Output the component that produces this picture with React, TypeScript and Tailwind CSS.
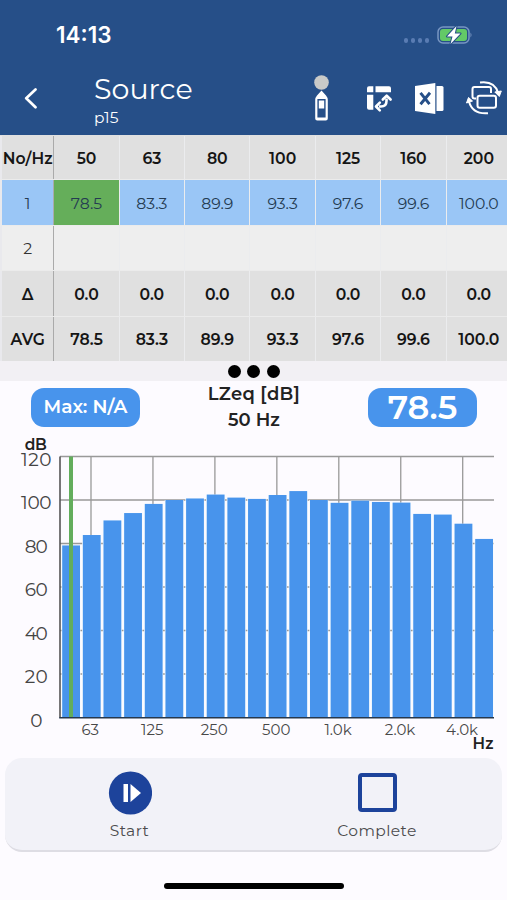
import { clsx } from "clsx";

const FREQUENCIES = ["50", "63", "80", "100", "125", "160", "200"];
const AVERAGES = ["78.5", "83.3", "89.9", "93.3", "97.6", "99.6", "100.0"];
const ZEROS = ["0.0", "0.0", "0.0", "0.0", "0.0", "0.0", "0.0"];

const LEVELS = [
  79.1, 83.9, 90.6, 94, 98.2, 100, 100.7, 102.5, 101.1, 100.5, 102.3, 104.1,
  100, 98.7, 99.7, 99.1, 98.8, 93.6, 93.3, 89.1, 82.1,
];
const BANDS = ["63", "125", "250", "500", "1.0k", "2.0k", "4.0k"];

// Chart geometry, in svg units (1 unit = 1 px).
const LEFT = 60;
const RIGHT = 494;
const TOP = 20.5;
const BASE = 281.5;
const PITCH = 20.65;

function levelY(db: number): number {
  return BASE - (db * (BASE - TOP)) / 120;
}

function StatusBar() {
  return (
    <div className="flex h-[70px] items-center justify-between pr-[34px] pl-14">
      <span className="font-['Inter',sans-serif] text-[22.5px] font-semibold">14:13</span>
      <div className="flex items-center gap-2">
        <div className="flex gap-[2.5px] pt-[11px]">
          {[0, 1, 2, 3].map((dot) => (
            <span key={dot} className="size-[4.5px] rounded-full bg-[#5a7cb3]" />
          ))}
        </div>
        <svg width="36" height="20" viewBox="0 0 36 20">
          <rect x="1" y="2" width="31" height="16" rx="5" fill="none" stroke="#7896c2" strokeWidth="1.5" />
          <rect x="3" y="4" width="27" height="12" rx="3" fill="#63c967" />
          <path d="M33.5 7.5 Q35.5 10 33.5 12.5Z" fill="#7896c2" />
          <path
            d="M19.5 1 L10 11.5 H15.5 L13.5 19 L23.5 8.5 H17.8Z"
            fill="#fff"
            stroke="#264f88"
            strokeWidth="2"
            paintOrder="stroke"
            strokeLinejoin="round"
          />
        </svg>
      </div>
    </div>
  );
}

function MeterIcon() {
  return (
    <svg width="18" height="48" viewBox="0 0 18 48">
      <circle cx="9.5" cy="8.5" r="7.3" fill="#c9cac8" />
      <path d="M9.5 16.5 L14 21.5 Q15.8 23.5 15.8 26 V44.5 Q15.8 46.5 13.8 46.5 H5.2 Q3.2 46.5 3.2 44.5 V26 Q3.2 23.5 5 21.5Z" fill="#fff" />
      <rect x="5.4" y="25" width="8.2" height="18.5" fill="#264f88" />
      <rect x="6.8" y="26.5" width="5.4" height="8" fill="#fff" />
    </svg>
  );
}

function PivotIcon() {
  return (
    <svg width="28" height="28" viewBox="0 0 28 28" fill="#fff">
      <path d="M4 1.2 H8.3 V7.2 H2 V3.2 Q2 1.2 4 1.2Z" />
      <path d="M10.5 1.2 H24 Q26 1.2 26 3.2 V7.2 H10.5Z" />
      <path d="M2 9.7 H8.3 V24.8 H4 Q2 24.8 2 22.8Z" />
      <path d="M14 21.5 H16 Q21.5 21.5 21.5 16 V13.5" fill="none" stroke="#fff" strokeWidth="2.6" />
      <path
        d="M17.8 14.5 L21.7 10.7 L25.6 14.5 M14.8 17.7 L11 21.5 L14.8 25.3"
        fill="none"
        stroke="#fff"
        strokeWidth="2.6"
        strokeLinecap="round"
        strokeLinejoin="round"
      />
    </svg>
  );
}

function SheetIcon() {
  return (
    <svg width="30" height="34" viewBox="0 0 30 34">
      <path d="M21.5 4 H27 Q28.5 4 28.5 5.5 V27.5 Q28.5 29 27 29 H21.5Z" fill="#fff" />
      <path d="M0 4 L20.3 1 V32 L0 29Z" fill="#fff" />
      <path d="M5.5 10.8 L14.5 22.2 M15 10.8 L5.5 22.2" fill="none" stroke="#264f88" strokeWidth="2.9" />
    </svg>
  );
}

function RotateIcon() {
  return (
    <svg width="36" height="36" viewBox="0 0 36 36" fill="none" stroke="#fff" strokeWidth="2">
      <path d="M10 18.5 H8.5 Q6.5 18.5 6.5 16.5 V9 Q6.5 7 8.5 7 H23 Q25 7 25 9 V13" />
      <rect x="11.5" y="15.7" width="18.5" height="12" rx="2.2" />
      <path d="M14 2.5 Q28.5 0.5 32.2 13" />
      <path d="M22 33.2 Q6.5 34.5 3 21.5" />
      <path d="M28.8 12 L35.3 11 L33.3 16.5Z M0.5 23 L2.5 17.5 L6.5 21Z" fill="#fff" strokeWidth="1" strokeLinejoin="round" />
    </svg>
  );
}

function TitleBar() {
  return (
    <div className="flex h-[65px] items-start">
      <svg className="mt-[17px] ml-[23px]" width="16" height="22" viewBox="0 0 16 22">
        <path
          d="M12.5 2.5 L3.2 11.2 L12.5 20.2"
          fill="none"
          stroke="#fff"
          strokeWidth="2.7"
          strokeLinecap="round"
          strokeLinejoin="round"
        />
      </svg>
      <div className="ml-[55px] w-[218px]">
        <h1 className="pt-[3px] text-[28.5px] leading-8 font-normal">Source</h1>
        <p className="text-[15.5px] leading-[25px]">p15</p>
      </div>
      <div className="flex items-start">
        <div className="mt-1">
          <MeterIcon />
        </div>
        <div className="mt-[15px] ml-[35px]">
          <PivotIcon />
        </div>
        <div className="mt-3 ml-[22px]">
          <SheetIcon />
        </div>
        <div className="mt-[10px] ml-[21px]">
          <RotateIcon />
        </div>
      </div>
    </div>
  );
}

type RowProps = {
  label: string;
  values: string[];
  tone: "head" | "active" | "empty" | "summary";
};

function Row({ label, values, tone }: RowProps) {
  return (
    <div
      className={clsx(
        "flex h-[45.4px] border-b border-[#ebebeb] text-[15.7px]",
        (tone === "head" || tone === "summary") && "bg-[#e0e0e0] font-semibold text-[#151515]",
        tone === "head" && "pt-px",
        tone === "active" && "bg-[#9ac6f6] text-[#243b52]",
        tone === "empty" && "bg-[#eee] text-[#333]",
      )}
    >
      <div className="flex w-[54.3px] shrink-0 items-center justify-center border-r border-l-2 border-r-[#aaa] border-l-[#e9e9ed] pt-0.5">
        {label}
      </div>
      {values.map((value, i) => (
        <div
          key={i}
          className={clsx(
            "flex w-[65.4px] shrink-0 items-center justify-center border-r border-[#ebecee] pt-0.5",
            tone === "active" && i === 0 && "bg-[#65ae5a]",
          )}
        >
          {value}
        </div>
      ))}
    </div>
  );
}

function Table() {
  return (
    <div className="h-[226px] overflow-hidden">
      <Row label="No/Hz" values={FREQUENCIES} tone="head" />
      <Row label="1" values={AVERAGES} tone="active" />
      <Row label="2" values={FREQUENCIES.map(() => "")} tone="empty" />
      <Row label="Δ" values={ZEROS} tone="summary" />
      <Row label="AVG" values={AVERAGES} tone="summary" />
    </div>
  );
}

function Chart() {
  return (
    <svg className="block" width="507" height="322" viewBox="0 0 507 322">
      {[20, 40, 60, 80, 100, 120].map((db) => (
        <path key={db} d={`M${LEFT} ${levelY(db)} H${RIGHT}`} stroke="#999" strokeWidth="1.3" />
      ))}
      {BANDS.map((band, i) => (
        <path
          key={band}
          d={`M${91 + i * PITCH * 3} ${TOP} V${BASE}`}
          stroke="#999"
          strokeWidth="1.3"
        />
      ))}
      {LEVELS.map((level, i) => (
        <rect
          key={i}
          x={61.5 + i * PITCH}
          y={levelY(level)}
          width="19"
          height={BASE - levelY(level)}
          fill="#f3fbff"
        />
      ))}
      {LEVELS.map((level, i) => (
        <rect
          key={i}
          x={62.2 + i * PITCH}
          y={levelY(level)}
          width="17.8"
          height={BASE - levelY(level)}
          fill="#4894ec"
        />
      ))}
      <rect x="69" y={TOP} width="4" height={BASE - TOP} fill="#63ad5c" />
      <path d={`M${LEFT} ${TOP} V${BASE}`} stroke="#555" strokeWidth="1.6" />
      <path d={`M${LEFT - 0.8} ${BASE + 0.3} H${RIGHT}`} stroke="#26384d" strokeWidth="1.6" />
      <g fill="#444" fontSize="18.5" textAnchor="middle">
        {[0, 20, 40, 60, 80, 100, 120].map((db) => (
          <text key={db} x="36.3" y={levelY(db) + 9.3} textLength={db > 99 ? 30.5 : db > 0 ? 23 : 12}>
            {db}
          </text>
        ))}
      </g>
      <g fill="#484848" fontSize="15" textAnchor="middle">
        {BANDS.map((band, i) => (
          <text key={band} x={90.3 + i * PITCH * 3} y="298.5">
            {band}
          </text>
        ))}
      </g>
      <g fill="#222" fontSize="15.5" fontWeight="600">
        <text x="24.8" y="13.5" textLength="22">dB</text>
        <text x="472.5" y="312.5" textLength="21">Hz</text>
      </g>
    </svg>
  );
}

function Controls() {
  return (
    <div className="mx-[5px] flex h-[94px] rounded-[17px] border-b-2 border-[#dedde4] bg-[#f2f2f8] text-[15.5px] tracking-[0.4px] text-[#4b4b4d]">
      <button className="flex w-[249px] flex-col items-center pt-[13px]">
        <svg width="44" height="44" viewBox="0 0 44 44">
          <circle cx="22.5" cy="22" r="21.6" fill="#1d439b" />
          <rect x="15.5" y="13" width="4.5" height="18" fill="#fff" />
          <path d="M22.5 13 L33 22 L22.5 31Z" fill="#fff" />
        </svg>
        <span className="mt-1">Start</span>
      </button>
      <button className="flex flex-1 flex-col items-center pt-[15px] pr-0.5">
        <span className="size-[39px] rounded-[4px] border-4 border-[#1d439b]" />
        <span className="mt-[7px]">Complete</span>
      </button>
    </div>
  );
}

export default function App() {
  return (
    <div className="h-[900px] w-[507px] overflow-hidden bg-[#fdfbff] font-['Montserrat','Inter',sans-serif]">
      <header className="h-[135px] bg-[#264f88] text-white">
        <StatusBar />
        <TitleBar />
      </header>
      <Table />
      <div className="flex h-5 items-center justify-center gap-[6.5px] bg-[#f2f0f4]">
        <span className="size-[13px] rounded-full bg-black" />
        <span className="size-[13px] rounded-full bg-black" />
        <span className="size-[13px] rounded-full bg-black" />
      </div>
      <div className="flex h-[55px] items-start justify-between pr-[30px] pl-[31px] text-[#222]">
        <div className="mt-[6.5px] flex h-[39px] w-[109px] items-center justify-center rounded-[13px] bg-[#4894ec] text-[18.5px] font-semibold text-white">
          Max: N/A
        </div>
        <div className="text-center text-[18px] leading-[26px] font-semibold">
          <p className="tracking-[0.3px]">LZeq [dB]</p>
          <p>50 Hz</p>
        </div>
        <div className="mt-[6.5px] flex h-[39px] w-[109px] items-center justify-center rounded-[13px] bg-[#4894ec] text-[33.5px] font-semibold text-white">
          78.5
        </div>
      </div>
      <Chart />
      <Controls />
      <div className="mx-auto mt-[31px] h-[6px] w-[180px] rounded-full bg-black" />
    </div>
  );
}
